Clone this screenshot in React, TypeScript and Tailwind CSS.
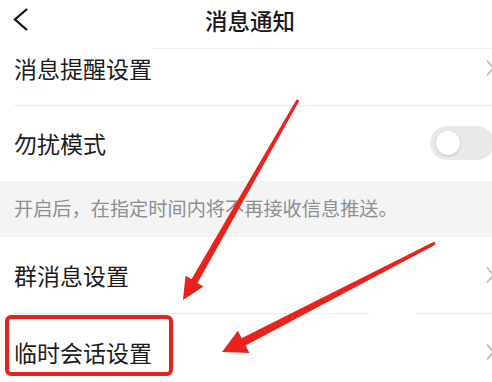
const font = { fontFamily: '"Noto Sans CJK SC", "Noto Sans", sans-serif' };

const Arrow = () => (
    <svg width="10" height="18" viewBox="0 0 10 18" className="mr-[-3px]">
        <polyline points="2,1.5 8.5,9 2,16.5" fill="none" stroke="#bdbdbd" strokeWidth="1.8" />
    </svg>
);

const Row = ({ label, tall = true }: { label: string; tall?: boolean }) => (
    <div className={`flex items-center justify-between bg-white pl-[14px] ${tall ? 'h-[76px]' : 'h-[56px] pb-[18px]'}`}>
        <span className="text-[23px] text-[#1c1c1c] leading-none">{label}</span>
        <Arrow />
    </div>
);

const App = () => {
    return (
        <div className="relative w-[492px] h-[382px] overflow-hidden bg-white" style={font}>
            {/* 顶部导航 */}
            <div className="relative flex items-center justify-center h-[48px] pb-[8px] bg-white">
                <svg className="absolute left-[12px] top-[7px]" width="18" height="26" viewBox="0 0 18 26">
                    <polyline points="15,2 3,12.5 15,23" fill="none" stroke="#111" strokeWidth="2.3" />
                </svg>
                <span className="text-[22.5px] font-medium text-[#1a1a1a] leading-none ml-[8px]">消息通知</span>
            </div>
            <div className="ml-[152px] border-t border-[#efefef]" />

            <Row label="消息提醒设置" tall={false} />
            <div className="ml-[14px] border-t border-[#ececec]" />

            {/* 勿扰模式 */}
            <div className="flex items-center justify-between h-[75px] pl-[14px] bg-white">
                <span className="text-[23px] text-[#1c1c1c] leading-none">勿扰模式</span>
                <div className="flex items-center w-[64px] h-[34px] mr-[-2px] rounded-full bg-[#e9e9eb] pl-[6px] -mt-[2px]">
                    <div className="w-[24px] h-[24px] rounded-full bg-white shadow-[0_1px_3px_rgba(0,0,0,0.18)]" />
                </div>
            </div>

            {/* 说明 */}
            <div className="flex items-center h-[56px] pl-[14px] bg-[#f4f4f5]">
                <span className="text-[19.2px] text-[#8e8e8e] leading-none">开启后，在指定时间内将不再接收信息推送。</span>
            </div>

            <Row label="群消息设置" />
            <div className="ml-[14px] border-t border-[#ececec]" />
            <Row label="临时会话设置" />

            {/* 标注 */}
            <div className="absolute left-[5px] top-[315px] w-[168px] h-[61px] border-[4px] border-[#e8231b] rounded-[6px]" />
            <div className="absolute left-[345px] top-[310px] w-[95px] h-[80px] rounded-[40px] bg-white" />
            <svg className="absolute inset-0 pointer-events-none" width="492" height="382" viewBox="0 0 492 382">
                <polygon
                    fill="#e8231b"
                    points="299.3,100.7 197.5,283 203.5,286.5 183,300 185.5,275.8 191.5,279.3 296.7,99.3"
                />
                <polygon
                    fill="#e8231b"
                    points="435.7,244.4 245.6,345.5 249.5,353 222,352 237.8,330.8 241.6,338.3 434.3,241.6"
                />
            </svg>
        </div>
    );
};

export default App;
